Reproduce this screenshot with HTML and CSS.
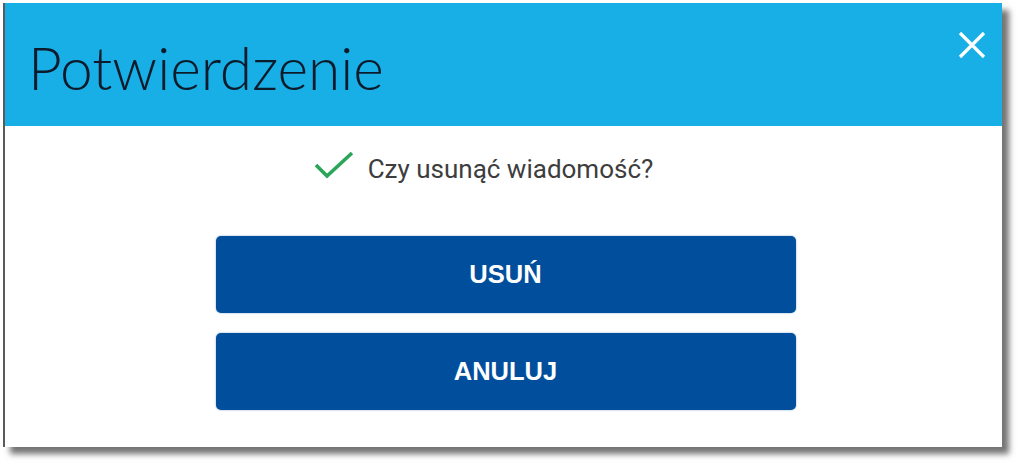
FILE: index.html
```html
<!DOCTYPE html>
<html lang="pl">
<head>
<meta charset="utf-8">
<title>Potwierdzenie</title>
<link rel="stylesheet" href="styles.css">
</head>
<body>
<div class="dialog">
  <div class="dialog-header">
    <h1 class="dialog-title">Potwierdzenie</h1>
    <button class="close-btn" aria-label="Zamknij">
      <svg width="28" height="28" viewBox="0 0 28 28"><path d="M2 2 L26 26 M26 2 L2 26" stroke="#fff" stroke-width="3.2" fill="none"/></svg>
    </button>
  </div>
  <div class="dialog-body">
    <div class="message">
      <svg class="check" width="40" height="30" viewBox="0 0 40 30"><path d="M2 15 L13 26 L38 3" stroke="#2ba55a" stroke-width="3.6" fill="none"/></svg>
      <span class="message-text">Czy usunąć wiadomość?</span>
    </div>
    <div class="actions">
      <button class="btn">USUŃ</button>
      <button class="btn">ANULUJ</button>
    </div>
  </div>
</div>
</body>
</html>
```
FILE: styles.css
```css
html, body {
  margin: 0;
  padding: 0;
  background: #fff;
}
body {
  padding: 3px 0 0 3px;
  min-height: 470px;
  box-sizing: border-box;
  font-family: "Liberation Sans", Arial, sans-serif;
}
.dialog {
  width: 997px;
  height: 444px;
  background: #fff;
  border-left: 2px solid #5a5a5a;
  box-shadow: 7px 7px 6px rgba(0, 0, 0, 0.55);
  display: flex;
  flex-direction: column;
}
.dialog-header {
  height: 123px;
  background: #17afe5;
  display: flex;
  align-items: flex-start;
  justify-content: space-between;
  padding: 0 16px 0 23px;
}
.dialog-title {
  margin: 24px 0 0 0;
  font-family: Lato, sans-serif;
  font-weight: 300;
  font-size: 58.6px;
  line-height: 80px;
  color: #0c1b2b;
  letter-spacing: 0;
}
.close-btn {
  margin-top: 28px;
  background: none;
  border: none;
  padding: 0;
  width: 28px;
  height: 28px;
  cursor: pointer;
}
.close-btn svg {
  display: block;
}
.dialog-body {
  display: flex;
  flex-direction: column;
  align-items: center;
  padding-top: 23px;
}
.message {
  display: flex;
  align-items: center;
  gap: 14px;
  height: 40px;
  margin-right: 40px;
}
.check {
  display: block;
  margin-top: -8px;
}
.message-text {
  font-family: Roboto, sans-serif;
  font-size: 26px;
  color: #3d3d3d;
  letter-spacing: 0;
}
.actions {
  margin-top: 47px;
  display: flex;
  flex-direction: column;
  gap: 20px;
  margin-left: 4px;
}
.btn {
  width: 580px;
  height: 77px;
  background: #014f9c;
  border: none;
  border-radius: 5px;
  color: #fff;
  font-family: "Liberation Sans", Arial, sans-serif;
  font-weight: bold;
  font-size: 25.5px;
  box-shadow: 0 0 2px rgba(1, 79, 156, 0.5);
  cursor: pointer;
}
```
